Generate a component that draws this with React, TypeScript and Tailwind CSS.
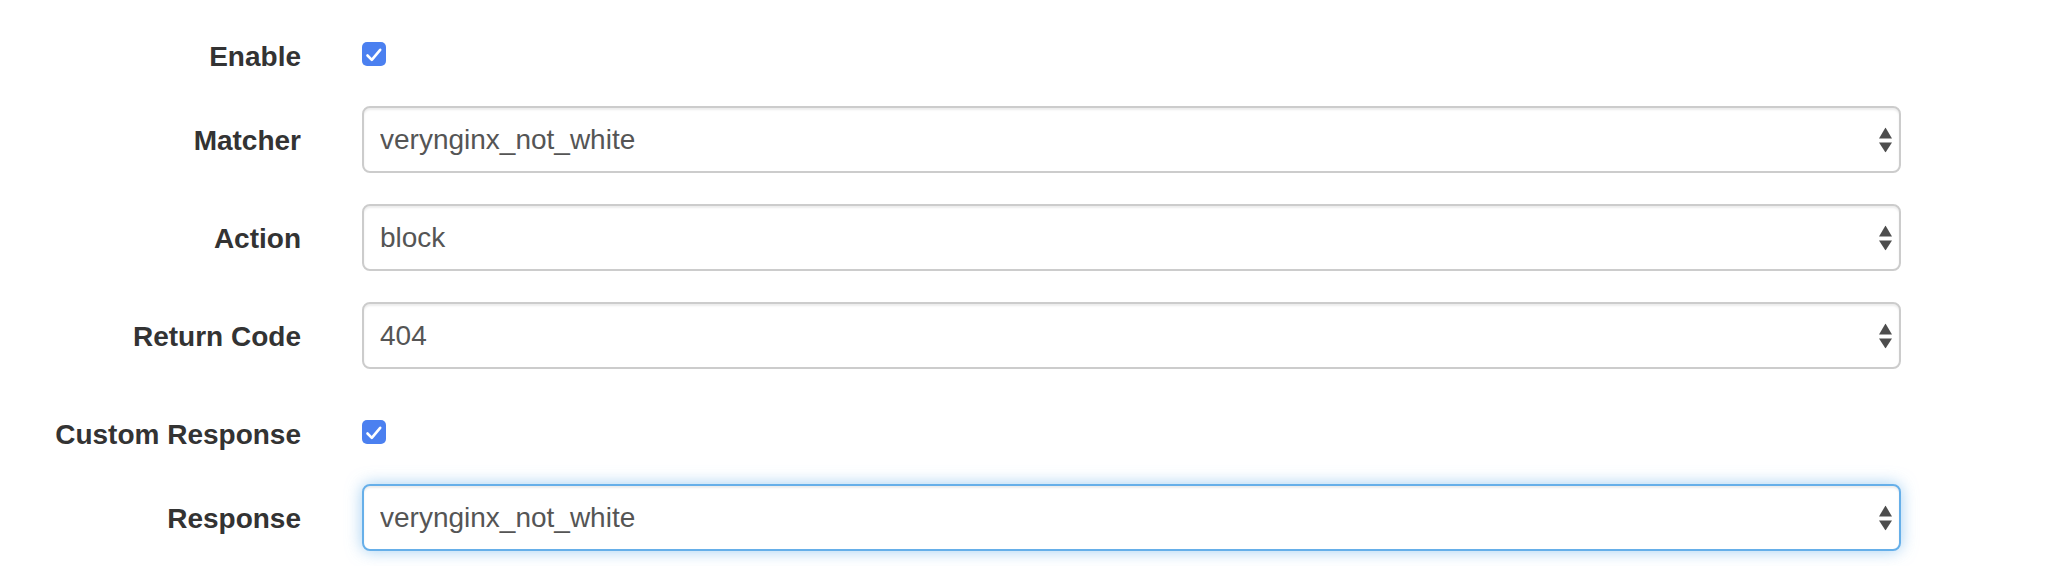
import { useState } from "react";

function Check({ checked, onChange }: { checked: boolean; onChange: () => void }) {
  return (
    <button
      type="button"
      onClick={onChange}
      className={`w-6 h-6 rounded-[5px] flex items-center justify-center ${checked ? "bg-[#4b80f0]" : "bg-white border-2 border-[#bbb]"}`}
    >
      {checked && (
        <svg width="24" height="24" viewBox="0 0 24 24">
          <polyline points="5.5,13.5 9.8,17.8 18.2,7.8" fill="none" stroke="white" strokeWidth="2.6" strokeLinecap="round" strokeLinejoin="round" />
        </svg>
      )}
    </button>
  );
}

function Select({ value, options, focused }: { value: string; options: string[]; focused?: boolean }) {
  const [val, setVal] = useState(value);
  return (
    <div className="relative w-[1539px] h-[67px]">
      <select
        value={val}
        onChange={(e) => setVal(e.currentTarget.value)}
        className={`appearance-none w-full h-full rounded-[8px] border-2 bg-white pl-4 pr-10 text-[28px] text-[#555] outline-none ${
          focused
            ? "border-[#66afe9] shadow-[inset_0_2px_2px_rgba(0,0,0,0.075),0_0_16px_rgba(102,175,233,0.6)]"
            : "border-[#ccc] shadow-[inset_0_2px_2px_rgba(0,0,0,0.075)]"
        }`}
      >
        {options.map((o) => (
          <option key={o} value={o}>
            {o}
          </option>
        ))}
      </select>
      <svg
        width="13"
        height="25"
        viewBox="0 0 13 25"
        className="absolute right-[9px] top-1/2 -translate-y-1/2 pointer-events-none"
      >
        <path d="M6.5 0 L13 11 L0 11 Z" fill="#4d4d4d" />
        <path d="M0 15 L13 15 L6.5 25 Z" fill="#4d4d4d" />
      </svg>
    </div>
  );
}

function Label({ children, nudge }: { children: string; nudge?: boolean }) {
  return (
    <div className={`w-[301px] shrink-0 text-right font-bold text-[28px] leading-[28px] text-[#333] ${nudge ? "pt-[5px]" : "pt-[2px]"}`}>
      {children}
    </div>
  );
}

export default function App() {
  const [enable, setEnable] = useState(true);
  const [custom, setCustom] = useState(true);

  return (
    <div className="w-[2052px] h-[566px] bg-white pt-[42px] font-['Liberation_Sans',Arial,sans-serif]">
      <div className="flex items-center gap-[61px] h-6">
        <Label nudge>Enable</Label>
        <Check checked={enable} onChange={() => setEnable(!enable)} />
      </div>

      <div className="flex items-center gap-[61px] mt-10">
        <Label>Matcher</Label>
        <Select value="verynginx_not_white" options={["verynginx_not_white", "all_request"]} />
      </div>

      <div className="flex items-center gap-[61px] mt-[31px]">
        <Label>Action</Label>
        <Select value="block" options={["block", "allow"]} />
      </div>

      <div className="flex items-center gap-[61px] mt-[31px]">
        <Label>Return Code</Label>
        <Select value="404" options={["400", "403", "404", "500"]} />
      </div>

      <div className="flex items-center gap-[61px] h-6 mt-[51px]">
        <Label nudge>Custom Response</Label>
        <Check checked={custom} onChange={() => setCustom(!custom)} />
      </div>

      <div className="flex items-center gap-[61px] mt-10">
        <Label>Response</Label>
        <Select value="verynginx_not_white" options={["verynginx_not_white"]} focused />
      </div>
    </div>
  );
}
